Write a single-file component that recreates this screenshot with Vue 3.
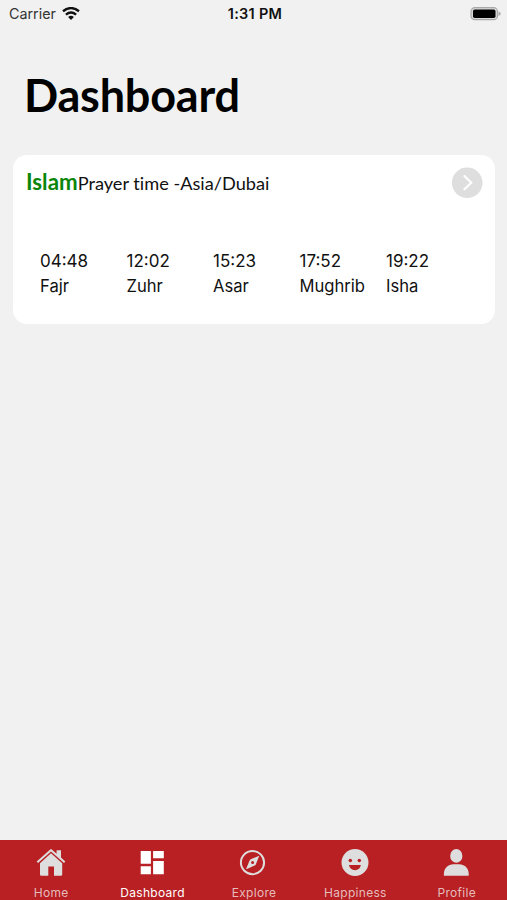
<script setup>
const prayers = [
  { time: '04:48', name: 'Fajr' },
  { time: '12:02', name: 'Zuhr' },
  { time: '15:23', name: 'Asar' },
  { time: '17:52', name: 'Mughrib' },
  { time: '19:22', name: 'Isha' },
]
const tabs = ['Home', 'Dashboard', 'Explore', 'Happiness', 'Profile']
const active = 'Dashboard'
</script>

<template>
  <div class="screen">
    <header class="status">
      <div class="carrier">
        <span class="carrier-name">Carrier</span>
        <svg class="wifi" width="18" height="14" viewBox="0 0 18 14" fill="none" stroke="#111" stroke-width="2.4">
          <path d="M1 4.3Q9-2.1 17 4.3" />
          <path d="M3.9 7.6Q9 3.4 14.1 7.6" />
          <path d="M9 12.9L6.1 10Q9 7.7 11.9 10Z" fill="#111" stroke="none" />
        </svg>
      </div>
      <span class="clock">1:31 PM</span>
      <div class="power">
        <svg width="31" height="14" viewBox="0 0 31 14">
          <rect x="1" y=".7" width="26.5" height="12" rx="3.8" fill="#d8d8d8" stroke="#a9a9a9" stroke-width="1.2" />
          <rect x="3" y="2.4" width="22.5" height="8.6" rx="1.8" fill="#000" />
          <path d="M28.5 4.5Q30.8 5.2 30.8 6.7T28.5 8.9Z" fill="#aaa" />
        </svg>
      </div>
    </header>
    <main>
      <h1 class="title">Dashboard</h1>
      <section class="card">
        <div class="card-head">
          <div class="heading"><b class="faith">Islam</b><span class="zone">Prayer time -Asia/Dubai</span></div>
          <svg width="31" height="31" viewBox="0 0 31 31">
            <circle cx="15.2" cy="15.7" r="15.3" fill="#dedede" />
            <path d="M12.4 9.1L19.3 15.7L12.4 22.3" fill="none" stroke="#fff" stroke-width="2.1" stroke-linecap="round" />
          </svg>
        </div>
        <div class="times">
          <div v-for="p in prayers" :key="p.name" class="prayer">
            <span class="time">{{ p.time }}</span>
            <span class="name">{{ p.name }}</span>
          </div>
        </div>
      </section>
    </main>
    <nav class="tabs">
      <div v-for="t in tabs" :key="t" class="tab" :class="{ active: t === active }">
        <svg width="30" height="30" viewBox="0 0 30 30" fill="currentColor">
          <g v-if="t === 'Home'">
            <path d="M.7 14.5L14.2 2.4Q15 1.8 15.8 2.4L20.6 6.7V3.3H25V10.6L29.3 14.5L28 16L15 4.4L2 16Z" />
            <path d="M15 6.2L26.2 16.2V27.4Q26.2 28.7 24.9 28.7H18V19.4H12.3V28.7H5.3Q4 28.7 4 27.4V16.2Z" />
          </g>
          <path v-else-if="t === 'Dashboard'" d="M3.7 4H13.9V16.7H3.7ZM16.1 4H26.8V11.3H16.1ZM3.7 19.2H13.9V27.3H3.7ZM16.1 14H26.8V27.3H16.1Z" />
          <g v-else-if="t === 'Explore'" transform="translate(.5 .1)">
            <circle cx="14" cy="15.5" r="11.6" fill="none" stroke="currentColor" stroke-width="2" />
            <path fill-rule="evenodd" d="M20.6 9.2Q20.9 8.5 20.1 8.9L12.3 12.2Q11.5 12.6 11.1 13.4L7.8 21.3Q7.6 22.1 8.4 21.8L16.1 18.5Q16.9 18.1 17.3 17.3ZM14.1 13.9A1.5 1.5 0 1 1 14.1 16.9A1.5 1.5 0 1 1 14.1 13.9Z" />
          </g>
          <g v-else-if="t === 'Happiness'">
            <circle cx="15" cy="15.5" r="13.5" />
            <circle cx="10.3" cy="13.6" r="1.75" fill="#b82023" />
            <circle cx="19.3" cy="13.6" r="1.75" fill="#b82023" />
            <path d="M9 18.1H20.8C20.5 21.2 18 23.2 15 23.2S9.4 21.2 9 18.1Z" fill="#b82023" />
          </g>
          <g v-else>
            <ellipse cx="15.3" cy="8.9" rx="6.1" ry="6.9" />
            <path d="M2.9 28.7V26.8C2.9 20.7 7.5 17.2 12.3 17.2H18.3C23.1 17.2 27.7 20.7 27.7 26.8V28.7Z" />
          </g>
        </svg>
        <span class="label">{{ t }}</span>
      </div>
    </nav>
  </div>
</template>

<style>
body { background: #f1f1f1; }
</style>

<style scoped>
.screen {
  box-sizing: border-box;
  display: flex;
  flex-direction: column;
  height: 900px;
  background: #f1f1f1;
  color: #111;
  font-family: Inter, "Liberation Sans", sans-serif;
}
.status {
  display: grid;
  grid-template-columns: 1fr auto 1fr;
  align-items: center;
  height: 27px;
  padding: 0 6px 0 9px;
}
.carrier { display: flex; align-items: center; gap: 6px; }
.carrier-name { font-size: 14.3px; color: #333; }
.clock { font-size: 14.5px; font-weight: 600; letter-spacing: .3px; }
.power { display: flex; justify-content: flex-end; }
main { flex: 1; }
.title {
  margin: 38px 0 0 24px;
  font: 700 45px/60px Lato, sans-serif;
  letter-spacing: -.2px;
  color: #000;
}
.card {
  box-sizing: border-box;
  height: 169px;
  margin: 29.5px 12px 0 12.5px;
  padding: 12.5px 12px 0 13.5px;
  border-radius: 14px;
  background: #fff;
}
.card-head { display: flex; justify-content: space-between; height: 31px; }
.heading { font-family: Lato, sans-serif; line-height: 29px; white-space: nowrap; font-variant-ligatures: none; }
.faith { font-size: 22.3px; color: #0b860b; }
.zone { font-size: 18.2px; }
.times {
  display: grid;
  grid-template-columns: repeat(5, 86.5px);
  margin: 50px 0 0 14px;
}
.prayer { display: flex; flex-direction: column; font-size: 16.6px; line-height: 26px; }
.time { font-size: 17px; }
.name { line-height: 25px; }
.tabs {
  display: grid;
  grid-template-columns: repeat(5, 1fr);
  height: 60px;
  background: #b82023;
}
.tab {
  display: flex;
  flex-direction: column;
  align-items: center;
  padding-top: 7px;
  color: #dedede;
}
.label { margin-top: 7px; padding-left: 1px; font-size: 12px; line-height: 17px; letter-spacing: .3px; color: #e6bcbb; }
.active, .active .label { color: #fff; }
</style>
